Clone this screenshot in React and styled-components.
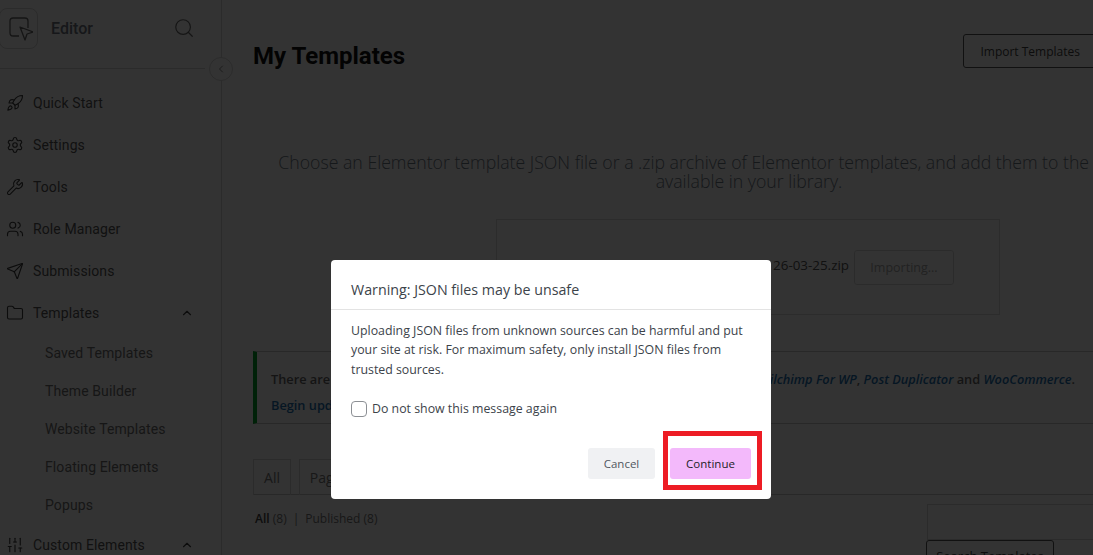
import React from 'react';
import styled, { createGlobalStyle } from 'styled-components';
import { Rocket, Settings, Wrench, Users, Send, Folder, ChevronUp, ChevronLeft, SlidersVertical, Search } from 'lucide-react';

const GlobalStyle = createGlobalStyle`
  html, body { margin: 0; padding: 0; background: #fff; overflow: hidden; }
  * { box-sizing: border-box; }
  #root { height: 555px; overflow: hidden; }
`;

const Page = styled.div`
  display: flex;
  width: 1093px;
  height: 555px;
  overflow: hidden;
  font-family: Roboto, "Liberation Sans", sans-serif;
  background: #fff;
`;

const Sidebar = styled.aside`
  position: relative;
  flex: 0 0 222px;
  height: 555px;
  border-right: 1px solid #d6d6d6;
`;

const Brand = styled.div`
  display: flex;
  align-items: center;
  height: 69px;
  margin-right: 16px;
  padding: 8px 10px 20px 0;
  border-bottom: 1px solid #d6d6d6;
`;

const LogoBox = styled.div`
  display: flex;
  align-items: center;
  justify-content: center;
  width: 39px;
  height: 41px;
  margin-left: -1px;
  border: 1px solid #d6d6d6;
  border-radius: 8px;
  color: #6a6a6a;
`;

const BrandName = styled.span`
  flex: 1;
  margin-left: 13px;
  font-size: 16px;
  font-weight: 500;
  color: #6f7680;
`;

const CollapseButton = styled.div`
  position: absolute;
  left: 209px;
  top: 57px;
  display: flex;
  align-items: center;
  justify-content: center;
  width: 24px;
  height: 24px;
  border: 1px solid #d6d6d6;
  border-radius: 50%;
  background: #fff;
  color: #8a8a8a;
`;

const Nav = styled.nav`
  display: flex;
  flex-direction: column;
  padding-top: 13px;
`;

const NavItem = styled.div`
  display: flex;
  align-items: center;
  gap: 9px;
  height: 42px;
  padding: 0 27px 0 6px;
  font-size: 14px;
  letter-spacing: 0.1px;
  color: #585858;
  span { flex: 1; }
  svg { color: #3c3c3c; }
`;

const SubItem = styled.div`
  display: flex;
  align-items: center;
  height: 38px;
  padding-left: 45px;
  font-size: 14px;
  letter-spacing: 0.1px;
  color: #707070;
`;

const SubList = styled.div`
  display: flex;
  flex-direction: column;
`;

const Main = styled.main`
  flex: 0 0 auto;
  width: 1050px;
  padding: 34px 0 0 31px;
`;

const Header = styled.header`
  display: flex;
  align-items: center;
  justify-content: space-between;
  width: 844px;
  height: 34px;
`;

const Title = styled.h1`
  margin: 9px 0 0;
  font-size: 24px;
  font-weight: 700;
  color: #111;
`;

const OutlineButton = styled.button`
  height: 34px;
  padding: 1px 16px 0;
  border: 1px solid #555;
  border-radius: 3px;
  background: #fff;
  font: 400 12px "Open Sans", sans-serif;
  color: #444;
  white-space: nowrap;
`;

const ImportIntro = styled.p`
  width: 992px;
  margin: 85px 0 0;
  font: 300 17.7px/19px "Open Sans", sans-serif;
  text-align: center;
  color: #6c7784;
`;

const UploadBox = styled.div`
  display: flex;
  align-items: center;
  width: 504px;
  height: 96px;
  margin: 28px 0 0 243px;
  padding: 0 0 0 51px;
  border: 1px solid #dcdcdc;
`;

const ChooseButton = styled.div`
  width: 69px;
  height: 24px;
  margin-top: 14px;
  border: 1px solid #666;
  border-radius: 3px;
`;

const FileName = styled.span`
  margin: -4px 0 0 auto;
  font: 400 13.4px "Open Sans", sans-serif;
  color: #555;
`;

const ImportingButton = styled.div`
  display: flex;
  align-items: center;
  justify-content: center;
  width: 100px;
  height: 35px;
  margin: 1px 45px 0 5px;
  border: 1px solid #d8d8d8;
  border-radius: 3px;
  font: 400 12.5px "Open Sans", sans-serif;
  color: #a8a8a8;
`;

const Notice = styled.div`
  width: 900px;
  height: 73px;
  margin-top: 36px;
  padding: 14px 0 0 14px;
  border: 1px solid #c8c8c8;
  border-left: 4px solid #00a32a;
  border-right: none;
  font: 600 12.75px/26px "Open Sans", sans-serif;
  color: #666;
`;

const NoticeLine = styled.div`
  display: flex;
  justify-content: space-between;
  width: 804px;
`;

const PluginName = styled.em`
  color: #2271b1;
`;

const PluginLink = styled.div`
  color: #2271b1;
`;

const Tabs = styled.div`
  display: flex;
  gap: 8px;
  width: 900px;
  height: 36px;
  margin-top: 35px;
  border-bottom: 1px solid #c8c8c8;
`;

const Tab = styled.div`
  display: flex;
  align-items: center;
  justify-content: center;
  width: ${({ $width }) => $width}px;
  height: 36px;
  border: 1px solid #d4d4d4;
  border-bottom: none;
  font: 400 14px "Open Sans", sans-serif;
  color: #777;
`;

const FilterRow = styled.div`
  display: flex;
  position: relative;
  align-items: flex-start;
  padding: 15px 0 0 2px;
  font: 400 12px/18px "Open Sans", sans-serif;
  color: #777;
  b { color: #444; font-weight: 600; }
  i { margin: 0 6px; font-style: normal; }
`;

const SearchBox = styled.div`
  position: absolute;
  left: 673px;
  top: 9px;
  display: flex;
  flex-direction: column;
`;

const SearchInput = styled.div`
  width: 200px;
  height: 36px;
  margin-left: 1px;
  border: 1px solid #d8d8d8;
`;

const SearchButton = styled.div`
  width: 128px;
  height: 30px;
  padding-top: 6px;
  border: 1px solid #555;
  border-radius: 3px;
  text-align: center;
  font: 400 13px "Open Sans", sans-serif;
  color: #444;
`;

const Backdrop = styled.div`
  position: fixed;
  inset: 0;
  padding: 260px 0 0 331px;
  background: rgba(0, 0, 0, 0.8);
`;

const Dialog = styled.div`
  display: flex;
  flex-direction: column;
  width: 440px;
  height: 239px;
  border-radius: 4px;
  background: #fff;
  font-family: "Open Sans", sans-serif;
  color: #3c434a;
`;

const DialogTitle = styled.h2`
  margin: 0;
  height: 50px;
  padding: 20px 20px 0;
  border-bottom: 1px solid #e3e3e3;
  font-size: 14.25px;
  line-height: 20px;
  font-weight: 400;
  color: #3c434a;
`;

const DialogBody = styled.p`
  margin: 0;
  padding: 10.5px 20px 0;
  font-size: 12.35px;
  line-height: 19.5px;
`;

const CheckRow = styled.label`
  display: flex;
  align-items: center;
  gap: 5px;
  margin-top: 21px;
  padding-left: 20px;
  font-size: 12.35px;
`;

const CheckBox = styled.span`
  width: 16px;
  height: 16px;
  border: 1px solid #8c8f94;
  border-radius: 4px;
`;

const DialogActions = styled.div`
  display: flex;
  justify-content: flex-end;
  gap: 15px;
  margin-top: 31px;
  padding-right: 20px;
`;

const DialogButton = styled.button`
  position: relative;
  width: ${({ $primary }) => ($primary ? 81 : 67)}px;
  height: 31px;
  padding: 0;
  border: none;
  border-radius: 3px;
  background: ${({ $primary }) => ($primary ? '#f3b9fb' : '#f0f1f3')};
  font: 400 11.5px "Open Sans", sans-serif;
  color: ${({ $primary }) => ($primary ? '#1d2327' : '#50575e')};
`;

const Highlight = styled.span`
  position: absolute;
  left: -7px;
  right: -11px;
  top: -17px;
  bottom: -11px;
  border: 5px solid #ed1c24;
  pointer-events: none;
`;

function LogoIcon() {
  return (
    <svg width="28" height="28" viewBox="0 0 28 28" fill="none" stroke="currentColor" strokeWidth="1.3" strokeLinejoin="round">
      <path d="M14 22H8a3 3 0 0 1-3-3V7a3 3 0 0 1 3-3h12a3 3 0 0 1 3 3v7" />
      <path d="M16 14l13 5-6 2-2 6z" transform="translate(-1 -1)" />
    </svg>
  );
}

const navTop = [
  ['Quick Start', Rocket],
  ['Settings', Settings],
  ['Tools', Wrench],
  ['Role Manager', Users],
  ['Submissions', Send],
];

const templateLinks = ['Saved Templates', 'Theme Builder', 'Website Templates', 'Floating Elements', 'Popups'];

export default function App() {
  return (
    <>
      <GlobalStyle />
      <Page>
        <Sidebar>
          <Brand>
            <LogoBox><LogoIcon /></LogoBox>
            <BrandName>Editor</BrandName>
            <Search size={22} strokeWidth={1.3} color="#6b6b6b" />
          </Brand>
          <CollapseButton><ChevronLeft size={12} /></CollapseButton>
          <Nav>
            {navTop.map(([label, Icon]) => (
              <NavItem key={label}>
                <Icon size={18} strokeWidth={1.5} />
                <span>{label}</span>
              </NavItem>
            ))}
            <NavItem>
              <Folder size={18} strokeWidth={1.5} />
              <span>Templates</span>
              <ChevronUp size={14} strokeWidth={2} />
            </NavItem>
            <SubList>
              {templateLinks.map((label) => <SubItem key={label}>{label}</SubItem>)}
            </SubList>
            <NavItem>
              <SlidersVertical size={18} strokeWidth={1.5} />
              <span>Custom Elements</span>
              <ChevronUp size={14} strokeWidth={2} />
            </NavItem>
          </Nav>
        </Sidebar>
        <Main>
          <Header>
            <Title>My Templates</Title>
            <OutlineButton>Import Templates</OutlineButton>
          </Header>
          <ImportIntro>
            Choose an Elementor template JSON file or a .zip archive of Elementor templates, and add them to the list of templates available in your library.
          </ImportIntro>
          <UploadBox>
            <ChooseButton />
            <FileName>26-03-25.zip</FileName>
            <ImportingButton>Importing...</ImportingButton>
          </UploadBox>
          <Notice>
            <NoticeLine>
              <span>There are</span>
              <span>
                <PluginName>Mailchimp For WP</PluginName>, <PluginName>Post Duplicator</PluginName> and <PluginName>WooCommerce</PluginName>.
              </span>
            </NoticeLine>
            <PluginLink>Begin updating</PluginLink>
          </Notice>
          <Tabs>
            <Tab $width={38}>All</Tab>
            <Tab $width={60}>Pages</Tab>
          </Tabs>
          <FilterRow>
            <b>All</b>&nbsp;(8)<i>|</i>Published&nbsp;(8)
            <SearchBox>
              <SearchInput />
              <SearchButton>Search Templates</SearchButton>
            </SearchBox>
          </FilterRow>
        </Main>
      </Page>
      <Backdrop>
        <Dialog>
          <DialogTitle>Warning: JSON files may be unsafe</DialogTitle>
          <DialogBody>
            Uploading JSON files from unknown sources can be harmful and put your site at risk. For maximum safety, only install JSON files from trusted sources.
          </DialogBody>
          <CheckRow>
            <CheckBox />
            Do not show this message again
          </CheckRow>
          <DialogActions>
            <DialogButton>Cancel</DialogButton>
            <DialogButton $primary>
              Continue
              <Highlight />
            </DialogButton>
          </DialogActions>
        </Dialog>
      </Backdrop>
    </>
  );
}
